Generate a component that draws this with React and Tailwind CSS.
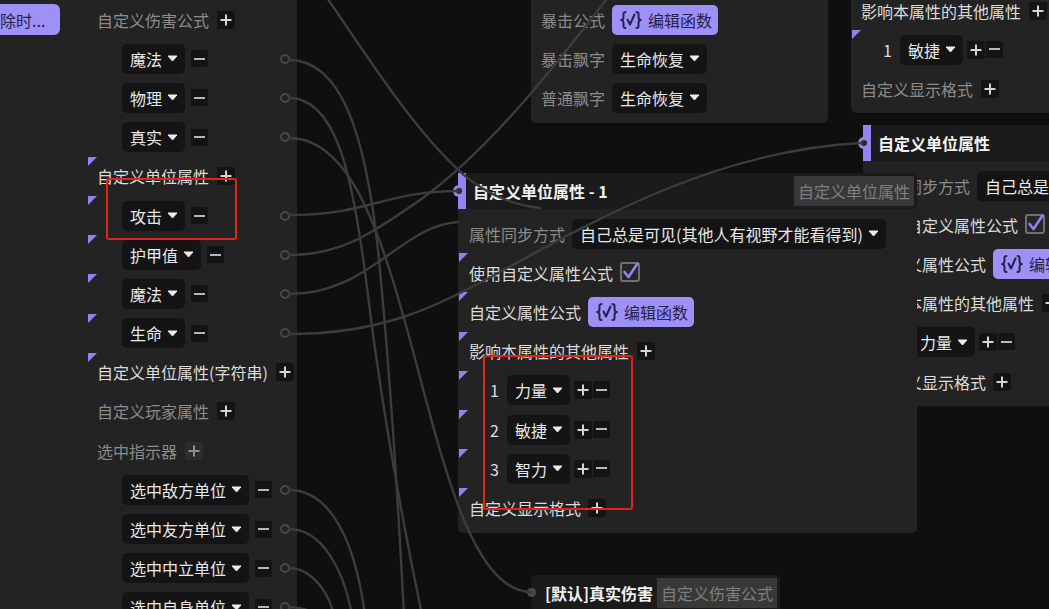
import React from "react";

// rows of the big property panel on the left
const leftRows = [
  { kind: "first" },
  { kind: "dd", text: "魔法" },
  { kind: "dd", text: "物理" },
  { kind: "dd", text: "真实" },
  { kind: "label", text: "自定义单位属性", tri: true },
  { kind: "dd", text: "攻击", tri: true },
  { kind: "dd", text: "护甲值", tri: true },
  { kind: "dd", text: "魔法", tri: true },
  { kind: "dd", text: "生命", tri: true },
  { kind: "label", text: "自定义单位属性(字符串)", tri: true },
  { kind: "label", text: "自定义玩家属性" },
  { kind: "label", text: "选中指示器", dim: true },
  { kind: "dd", text: "选中敌方单位" },
  { kind: "dd", text: "选中友方单位" },
  { kind: "dd", text: "选中中立单位" },
  { kind: "dd", text: "选中自身单位" },
];

const wires = [
  "M289 60 C 340 60, 365 130, 378 250 C 390 370, 398 500, 404 615",
  "M289 98 C 335 98, 352 170, 366 280 C 378 380, 398 500, 422 615",
  "M289 138 C 350 138, 380 230, 410 340 C 440 450, 470 592, 531 592",
  "M289 215 C 370 215, 385 191, 458 191",
  "M289 255 C 340 255, 370 235, 420 200 C 490 150, 560 60, 612 -8",
  "M289 294 C 370 294, 400 226, 458 222",
  "M289 334 C 380 334, 430 310, 500 272 C 600 217, 720 150, 862 143",
  "M325 -5 C 370 60, 420 140, 470 180 C 495 198, 515 205, 540 208",
  "M289 490 C 330 490, 355 540, 365 615",
  "M289 529 C 322 529, 344 570, 352 615",
  "M289 568 C 310 568, 328 590, 334 615",
  "M289 607 C 300 607, 312 611, 316 615",
];

function Tri({ className }) {
  return (
    <svg width="9" height="9" viewBox="0 0 9 9" className={"absolute top-0 " + className}>
      <polygon points="0,0 9,0 0,9" fill="#8f83f2" />
    </svg>
  );
}

function Caret() {
  return (
    <svg width="11" height="7" viewBox="0 0 11 7">
      <path d="M1 1 H10 L5.5 6 Z" fill="#ececec" stroke="#ececec" strokeWidth="1" strokeLinejoin="round" />
    </svg>
  );
}

function PlusBtn({ dim }) {
  return (
    <span
      className={
        dim
          ? "flex h-[18px] w-[18px] items-center justify-center rounded-[2px] bg-[#2c2c2c]"
          : "flex h-[18px] w-[18px] items-center justify-center rounded-[2px] bg-[#141414]"
      }
    >
      <svg width="12" height="12" viewBox="0 0 12 12">
        <path d="M6 0.5V11.5M0.5 6H11.5" stroke={dim ? "#8d8d8d" : "#d4d4d4"} strokeWidth="2" />
      </svg>
    </span>
  );
}

function MinusBtn() {
  return (
    <span className="flex h-[17px] w-[17px] items-center justify-center rounded-[2px] bg-[#141414]">
      <svg width="11" height="2" viewBox="0 0 11 2">
        <path d="M0 1H11" stroke="#b8b8b8" strokeWidth="2" />
      </svg>
    </span>
  );
}

function Dropdown({ text }) {
  return (
    <span className="flex h-[30px] items-center gap-[5px] rounded-[5px] bg-[#141414] pl-[8px] pr-[7px] text-[#e8e8e8]">
      <span>{text}</span>
      <Caret />
    </span>
  );
}

function FnIcon() {
  return (
    <svg width="22" height="20" viewBox="0 0 22 20" fill="none" stroke="#25224c" strokeWidth="2" strokeLinecap="round" strokeLinejoin="round">
      <path d="M5.5 2 C3 2 3.5 4 3.5 6.5 C3.5 8.5 2.8 10 1.2 10 C2.8 10 3.5 11.5 3.5 13.5 C3.5 16 3 18 5.5 18" />
      <path d="M16.5 2 C19 2 18.5 4 18.5 6.5 C18.5 8.5 19.2 10 20.8 10 C19.2 10 18.5 11.5 18.5 13.5 C18.5 16 19 18 16.5 18" />
      <path d="M7.5 9.5 L10 14.5 L14.5 4.5" />
    </svg>
  );
}

function FnButton() {
  return (
    <span className="flex h-[30px] items-center gap-[6px] rounded-[5px] bg-[#9d90f6] pl-[8px] pr-[6px] text-[#25224c]">
      <FnIcon />
      <span>编辑函数</span>
    </span>
  );
}

function CheckBox() {
  return (
    <svg width="21" height="21" viewBox="0 0 21 21">
      <rect x="1" y="2" width="18" height="18" rx="2" fill="#262626" stroke="#707070" strokeWidth="2" />
      <path d="M4.5 11 L8.5 16 L17.5 2.5" fill="none" stroke="#8f83f2" strokeWidth="2.6" strokeLinecap="round" strokeLinejoin="round" />
    </svg>
  );
}

function LeftRow({ kind, text, tri, dim }) {
  return (
    <div className="relative flex h-[39.2px] shrink-0 items-center">
      {tri && <Tri className="left-[88px]" />}
      {kind === "first" && (
        <>
          <span className="-ml-[16px] flex h-[31px] w-[76px] items-center rounded-[6px] bg-[#9d90f6] text-[#25224c]">
            移除时...
          </span>
          <span className="ml-[37px] text-[#8b8b8b]">自定义伤害公式</span>
          <span className="ml-[8px]">
            <PlusBtn />
          </span>
        </>
      )}
      {kind === "label" && (
        <span className="flex items-center gap-[8px] pl-[97px]">
          <span className={tri ? "text-[#dcdcdc]" : "text-[#8b8b8b]"}>{text}</span>
          <PlusBtn dim={dim} />
        </span>
      )}
      {kind === "dd" && (
        <>
          <span className="flex items-center gap-[6px] pl-[122px]">
            <Dropdown text={text} />
            <MinusBtn />
          </span>
          <span className="ml-auto mr-[7px] h-[10px] w-[10px] rounded-full border-2 border-[#484848]" />
        </>
      )}
    </div>
  );
}

function LeftPanel() {
  return (
    <div className="flex h-full w-[297px] shrink-0 flex-col bg-[#232323]">
      {leftRows.map((r, i) => (
        <LeftRow key={i} {...r} />
      ))}
    </div>
  );
}

function Row({ tri, pad, children }) {
  return (
    <div className={"relative flex h-[39.2px] items-center " + pad}>
      {tri && <Tri className="left-[1px]" />}
      {children}
    </div>
  );
}

function ItemRow({ n, value, pad }) {
  return (
    <Row tri pad={pad}>
      <span className="w-[9px] text-[#dcdcdc]">{n}</span>
      <span className="ml-[8px]">
        <Dropdown text={value} />
      </span>
      <span className="ml-[4px] flex gap-[1px]">
        <PlusBtn />
        <MinusBtn />
      </span>
    </Row>
  );
}

function AttrNode({ pos, title, tag, items }) {
  return (
    <div className={"absolute w-[459px] " + pos}>
      <div className="flex h-[36px] items-center rounded-tr-[4px] bg-[#1b1b1b]">
        <div className="relative h-full w-[8px] bg-[#9385f0]">
          <span className="absolute left-[-5px] top-[12px] h-[12px] w-[12px] rounded-full bg-[#9385f0]">
            <span className="absolute left-[3px] top-[3px] h-[6px] w-[6px] rounded-full bg-[#2a2a2a]" />
          </span>
        </div>
        <span className="ml-[7px] font-bold text-[#f2f2f2]">{title}</span>
        {tag && (
          <span className="ml-auto mr-[3px] flex h-[30px] items-center bg-[#383838] px-[4px] text-[#7e7e7e]">{tag}</span>
        )}
      </div>
      <div className="rounded-b-[5px] bg-[#232323] py-[5px]">
        <Row pad="pl-[11px]">
          <span className="text-[#8b8b8b]">属性同步方式</span>
          <span className="ml-[7px]">
            <Dropdown text="自己总是可见(其他人有视野才能看得到)" />
          </span>
        </Row>
        <Row tri pad="pl-[11px]">
          <span className="text-[#dcdcdc]">使用自定义属性公式</span>
          <span className="ml-[7px] mt-[-2px]">
            <CheckBox />
          </span>
        </Row>
        <Row tri pad="pl-[11px]">
          <span className="text-[#dcdcdc]">自定义属性公式</span>
          <span className="ml-[7px]">
            <FnButton />
          </span>
        </Row>
        <Row tri pad="pl-[11px]">
          <span className="text-[#dcdcdc]">影响本属性的其他属性</span>
          <span className="ml-[8px]">
            <PlusBtn />
          </span>
        </Row>
        {items.map(([n, v]) => (
          <ItemRow key={n} n={n} value={v} pad="pl-[32px]" />
        ))}
        <Row tri pad="pl-[11px]">
          <span className="text-[#dcdcdc]">自定义显示格式</span>
          <span className="ml-[7px]">
            <PlusBtn />
          </span>
        </Row>
      </div>
    </div>
  );
}

export default function App() {
  return (
    <div className="relative flex h-[609px] w-[1049px] overflow-hidden bg-[#0f0f0f] font-['Noto_Sans_CJK_SC',sans-serif] text-[16px] leading-[20px]">
      <LeftPanel />

      {/* node canvas */}
      <div className="relative flex-1">
        {/* critical hit node */}
        <div className="absolute left-[234px] top-0 w-[297px] rounded-b-[5px] bg-[#232323] pb-[5px]">
          <Row pad="pl-[10px]">
            <span className="text-[#8b8b8b]">暴击公式</span>
            <span className="ml-[7px]">
              <FnButton />
            </span>
          </Row>
          <Row pad="pl-[10px]">
            <span className="text-[#8b8b8b]">暴击飘字</span>
            <span className="ml-[7px]">
              <Dropdown text="生命恢复" />
            </span>
          </Row>
          <Row pad="pl-[10px]">
            <span className="text-[#8b8b8b]">普通飘字</span>
            <span className="ml-[7px]">
              <Dropdown text="生命恢复" />
            </span>
          </Row>
        </div>

        {/* top right node */}
        <div className="absolute left-[554px] top-[-9px] w-[300px] rounded-bl-[5px] bg-[#232323] pb-[4px]">
          <Row tri pad="pl-[10px]">
            <span className="text-[#dcdcdc]">影响本属性的其他属性</span>
            <span className="ml-[8px]">
              <PlusBtn />
            </span>
          </Row>
          <ItemRow n="1" value="敏捷" pad="pl-[32px]" />
          <Row pad="pl-[10px]">
            <span className="text-[#8b8b8b]">自定义显示格式</span>
            <span className="ml-[8px]">
              <PlusBtn />
            </span>
          </Row>
        </div>

        <AttrNode pos="left-[566px] top-[125px]" title="自定义单位属性" items={[["1", "力量"]]} />

        {/* default true damage */}
        <div className="absolute left-[234px] top-[575px] flex h-[36px] w-[249px] items-center rounded-t-[4px] bg-[#1b1b1b]">
          <span className="absolute left-[-4px] top-[13px] h-[9px] w-[9px] rounded-full bg-[#4a4a4a]" />
          <span className="ml-[14px] font-bold text-[#f2f2f2]">[默认]真实伤害</span>
          <span className="ml-auto mr-[3px] flex h-[30px] items-center bg-[#383838] px-[4px] text-[#7e7e7e]">自定义伤害公式</span>
        </div>

        <AttrNode
          pos="left-[161px] top-[173px]"
          title="自定义单位属性 - 1"
          tag="自定义单位属性"
          items={[
            ["1", "力量"],
            ["2", "敏捷"],
            ["3", "智力"],
          ]}
        />
      </div>

      {/* wires */}
      <svg className="pointer-events-none absolute left-0 top-0" width="1049" height="609" viewBox="0 0 1049 609" fill="none">
        {wires.map((d, i) => (
          <path key={i} d={d} stroke="#3c3c3c" strokeWidth="2.4" strokeLinecap="round" />
        ))}
      </svg>

      {/* highlight boxes */}
      <div className="pointer-events-none absolute left-[106px] top-[178px] h-[62px] w-[131px] rounded-[3px] border-2 border-[#e2231a]" />
      <div className="pointer-events-none absolute left-[483px] top-[355px] h-[155px] w-[150px] rounded-[3px] border-2 border-[#e2231a]" />
    </div>
  );
}
